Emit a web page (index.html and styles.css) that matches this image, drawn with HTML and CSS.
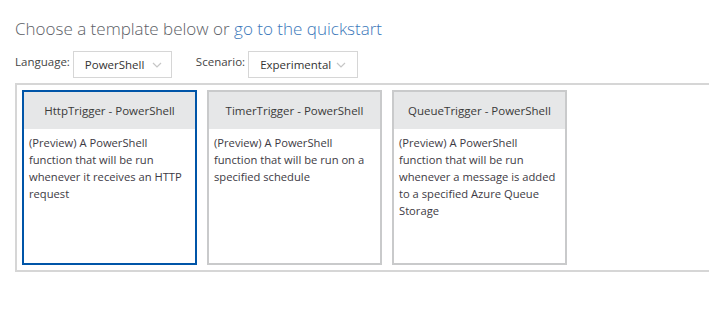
FILE: index.html
```html
<!DOCTYPE html>
<html>
<head>
<meta charset="utf-8">
<link rel="stylesheet" href="styles.css">
</head>
<body>
<div class="page">
  <h1 class="title">Choose a template below or <a class="link" href="#">go to the quickstart</a></h1>
  <div class="filters">
    <label class="filter">
      <span class="filter-label">Language:</span>
      <span class="select select-lang"><span class="select-text">PowerShell</span><svg class="chev" width="10" height="6" viewBox="0 0 10 6"><path d="M1 1 L5 5 L9 1" fill="none" stroke="#c6c6c6" stroke-width="1.2"/></svg></span>
    </label>
    <label class="filter">
      <span class="filter-label">Scenario:</span>
      <span class="select select-scn"><span class="select-text">Experimental</span><svg class="chev" width="10" height="6" viewBox="0 0 10 6"><path d="M1 1 L5 5 L9 1" fill="none" stroke="#c6c6c6" stroke-width="1.2"/></svg></span>
    </label>
  </div>
  <div class="templates">
    <div class="card selected">
      <div class="card-head">HttpTrigger - PowerShell</div>
      <div class="card-body">(Preview) A PowerShell function that will be run whenever it receives an HTTP request</div>
    </div>
    <div class="card">
      <div class="card-head">TimerTrigger - PowerShell</div>
      <div class="card-body">(Preview) A PowerShell function that will be run on a specified schedule</div>
    </div>
    <div class="card">
      <div class="card-head">QueueTrigger - PowerShell</div>
      <div class="card-body">(Preview) A PowerShell function that will be run whenever a message is added to a specified Azure Queue Storage</div>
    </div>
  </div>
</div>
</body>
</html>
```

FILE: styles.css
```css
html, body {
  margin: 0;
  padding: 0;
  background: #ffffff;
}
body {
  font-family: "Open Sans", "Noto Sans", sans-serif;
  color: #3a3a3a;
}
.page {
  padding: 17px 0 0 15px;
}
.title {
  margin: 0;
  font-size: 17px;
  font-weight: 300;
  line-height: 24px;
  color: #5c6066;
  white-space: nowrap;
}
.link {
  color: #3b78ba;
  text-decoration: none;
}
.filters {
  display: flex;
  align-items: center;
  gap: 24px;
  margin-top: 10px;
  height: 27px;
}
.filter {
  display: flex;
  align-items: center;
  gap: 3px;
}
.filter-label {
  font-size: 11.5px;
  color: #444;
  position: relative;
  top: -3px;
}
.select {
  box-sizing: border-box;
  height: 27px;
  border: 1px solid #d6d6d6;
  display: flex;
  align-items: center;
  padding: 0 9px 0 11px;
  font-size: 11.5px;
  color: #333;
}
.select-lang { width: 99px; }
.select-scn { width: 110px; padding-right: 11px; }
.chev {
  display: block;
  margin-left: auto;
}
.templates {
  box-sizing: border-box;
  margin-top: 5px;
  border: 2px solid #d6d6d6;
  border-right: none;
  padding: 5px;
  display: flex;
  gap: 10px;
}
.card {
  box-sizing: border-box;
  width: 175px;
  height: 175px;
  border: 2px solid #c9cacb;
  background: #fff;
}
.card.selected {
  border-color: #0055a8;
}
.card-head {
  height: 37px;
  background: #e6e7e8;
  display: flex;
  align-items: center;
  justify-content: center;
  font-size: 11.5px;
  color: #3a3a3a;
  white-space: nowrap;
}
.card-body {
  padding: 5px 3px 0 5px;
  font-size: 11.2px;
  line-height: 17px;
  color: #3d3a44;
}
```
